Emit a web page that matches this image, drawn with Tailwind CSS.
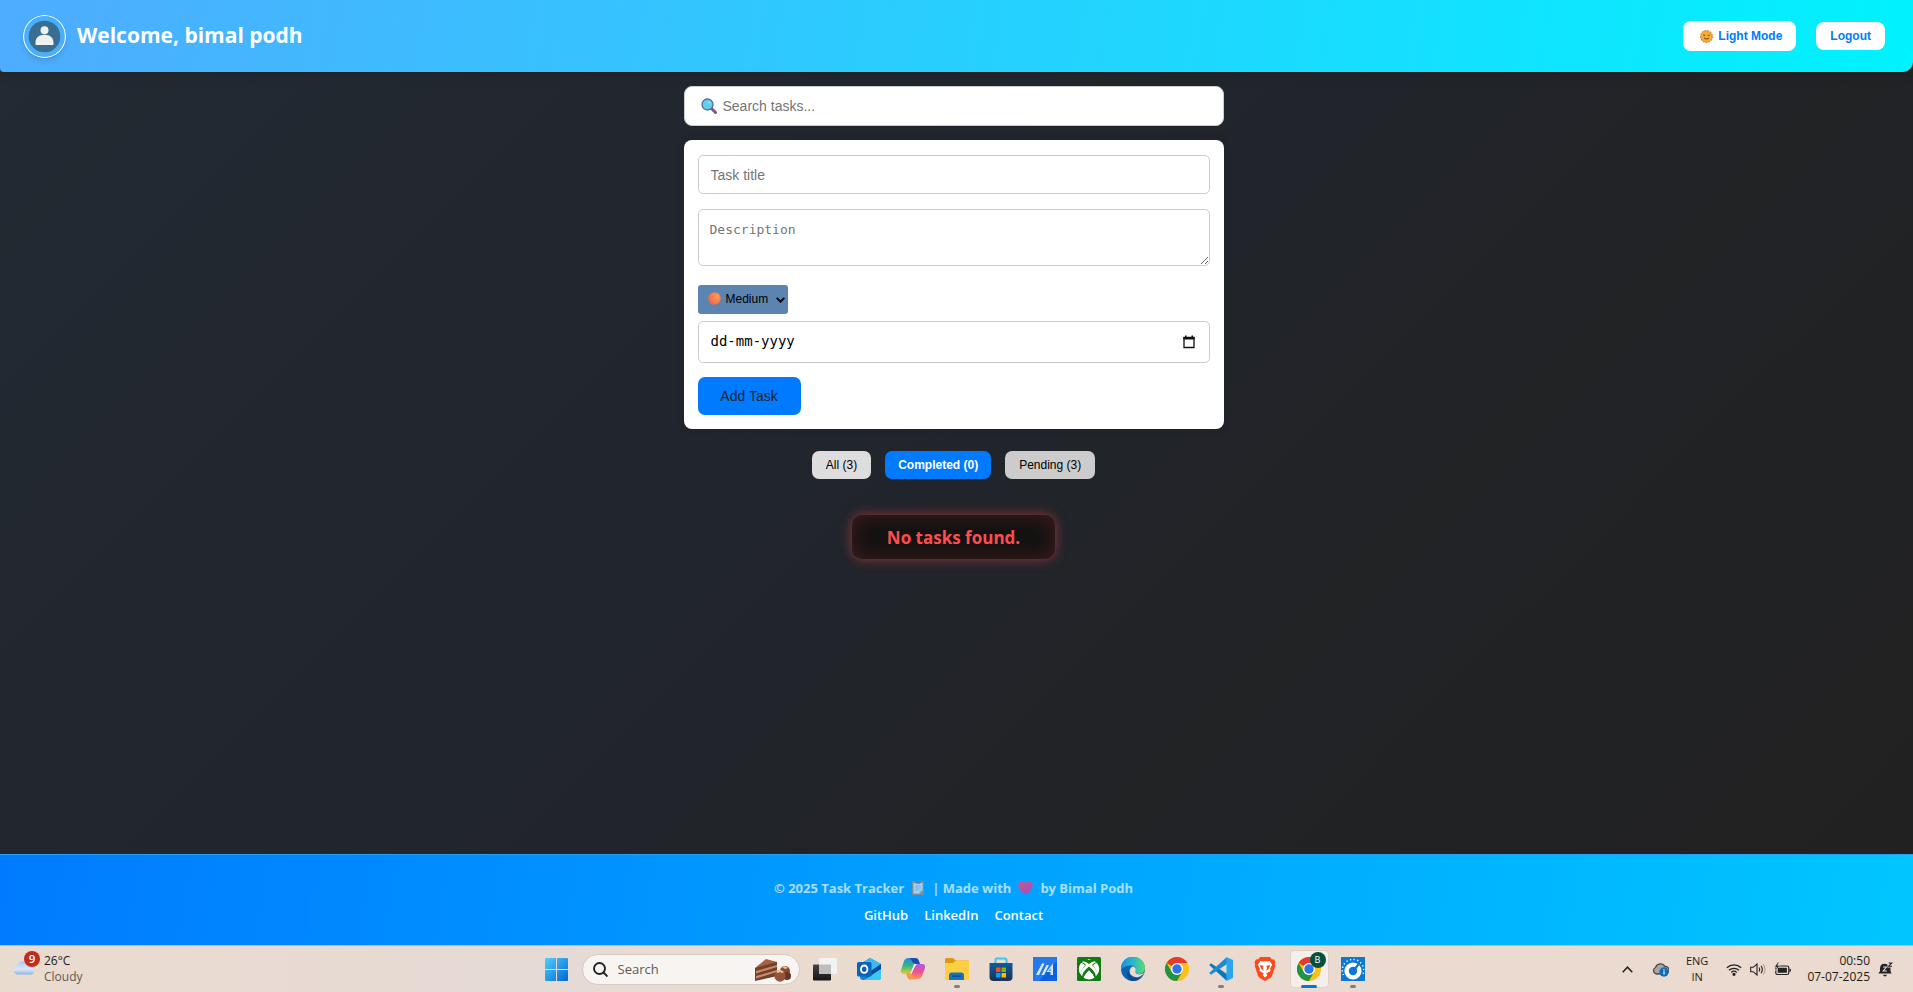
<!DOCTYPE html>
<html lang="en">
<head>
<meta charset="utf-8">
<title>Task Tracker</title>
<script src="https://cdn.jsdelivr.net/npm/@tailwindcss/browser@4"></script>
</head>
<body class="flex min-h-screen flex-col bg-[linear-gradient(135deg,#232a33_0%,#21252c_45%,#212326_65%,#212121_100%)] font-['Open_Sans',sans-serif]">

<!-- App header -->
<header class="flex h-[72px] items-center justify-between rounded-br-[10px] rounded-bl-[4px] bg-[linear-gradient(100deg,#4facfe,#00f2fe)] pr-7 pl-[23px] shadow-[0_4px_12px_rgba(0,0,0,0.1)]">
  <div class="flex items-center gap-[11px]">
    <svg class="size-[43px] rounded-full shadow-md" viewBox="0 0 43 43" role="img" aria-label="Avatar">
      <circle cx="21.500" cy="21.500" r="21" fill="#4aaefe" stroke="#fff" stroke-width="1.200"/>
      <circle cx="21.500" cy="21.500" r="15.800" fill="#376e92"/>
      <circle cx="21.500" cy="15.300" r="4" fill="#f0f0ee"/>
      <path d="M12.500 29.500v-2c0-5 4-7.700 9-7.700s9 2.700 9 7.700v2q0 .5-.8.5h-16.400q-.8 0-.8-.5z" fill="#f0f0ee"/>
    </svg>
    <h1 class="text-[21px] font-bold text-white">Welcome, bimal podh</h1>
  </div>
  <div class="flex items-center gap-5 font-['Liberation_Sans',sans-serif] text-xs font-bold text-[#007bff]">
    <button class="flex h-[30px] items-center gap-[5px] rounded-lg bg-white pr-[14px] pl-[17px]">
      <svg class="size-[13px]" viewBox="0 0 12 12" aria-hidden="true">
        <circle cx="6" cy="6" r="5.500" fill="#f7a43b" stroke="#c98a45" stroke-width="1" stroke-dasharray="1.600 1"/>
        <circle cx="6" cy="6" r="4.300" fill="#f8ae33"/>
        <path d="M3 4.600l1.800.5M9 4.600l-1.800.5M3.700 7.300q2.300 2 4.600 0" stroke="#6b4a2c" stroke-width="1" fill="none"/>
      </svg>
      <span>Light Mode</span>
    </button>
    <button class="h-7 rounded-lg bg-white px-[14px]">Logout</button>
  </div>
</header>

<main class="flex flex-1 flex-col items-center pt-[14px] pr-[6px]">
  <div class="relative w-full max-w-[540px]">
    <input type="search" aria-label="Search tasks" placeholder="Search tasks..." class="h-10 w-full rounded-lg border border-[#ccc] bg-white pr-4 pl-[38px] font-['Liberation_Sans',sans-serif] text-sm placeholder:text-[#757575]">
    <svg class="absolute top-[12px] left-[17px] size-4" viewBox="0 0 16 16" aria-hidden="true">
      <path d="M10.500 10.500l4 4" stroke="#83508e" stroke-width="3" stroke-linecap="round"/>
      <circle cx="6.500" cy="6.500" r="5.500" fill="#5fd0ee" stroke="#536b9c" stroke-width="1.300"/>
      <circle cx="8" cy="4.500" r="1" fill="#a9e9f7"/>
    </svg>
  </div>

  <form class="mt-[14px] flex w-full max-w-[540px] flex-col items-start rounded-lg bg-white px-[14px] pt-[15px] pb-[14px] shadow-[0_0_10px_rgba(0,0,0,0.1)]">
    <input type="text" aria-label="Task title" placeholder="Task title" class="h-[39px] w-full rounded-[5px] border border-[#ccc] px-3 font-['Liberation_Sans',sans-serif] text-sm placeholder:text-[#757575]">
    <textarea aria-label="Description" placeholder="Description" class="mt-[15px] block h-[57px] w-full resize-y rounded-[5px] border border-[#ccc] px-[11px] py-3 font-['DejaVu_Sans_Mono',monospace] text-[13px] leading-4 placeholder:text-[#757575]"></textarea>
    <div class="relative mt-[19px] font-['Liberation_Sans',sans-serif] text-xs">
      <select aria-label="Priority" class="block h-[29px] w-[90px] appearance-none rounded-[3px] bg-[#5b84b1] pb-[2px] pl-7 text-black">
        <option>Low</option>
        <option selected>Medium</option>
        <option>High</option>
      </select>
      <svg class="pointer-events-none absolute top-[7px] left-[10px] size-[13px]" viewBox="0 0 13 13" aria-hidden="true">
        <defs><radialGradient id="dot" cx=".7" cy=".35" r=".7"><stop offset="0" stop-color="#ffa04c"/><stop offset="1" stop-color="#f4674f"/></radialGradient></defs>
        <circle cx="6.500" cy="6.500" r="6.200" fill="url(#dot)"/>
      </svg>
      <svg class="pointer-events-none absolute top-[12px] right-[3px] h-[6px] w-[9px]" viewBox="0 0 9 6" fill="none" stroke="#000" stroke-width="2" aria-hidden="true"><path d="M.7.900l3.800 3.800L8.300.900"/></svg>
    </div>
    <div class="relative mt-[7px] w-full">
      <input type="text" aria-label="Due date" placeholder="dd-mm-yyyy" class="block h-[42px] w-full rounded-[5px] border border-[#ccc] px-3 pb-[2px] font-['DejaVu_Sans_Mono',monospace] text-sm placeholder:text-black">
      <button type="button" aria-label="Open calendar" class="absolute top-[14px] right-[14px]">
        <svg class="size-[14px]" viewBox="0 0 14 14" aria-hidden="true"><path d="M2 2.500h10v10H2z" fill="none" stroke="#111" stroke-width="1.300"/><path d="M1.400 2h11.200v2.500H1.400zM3 .500h1.500V3H3zM9.500.500H11V3H9.500z" fill="#111"/></svg>
      </button>
    </div>
    <button type="button" class="mt-[14px] h-[38px] w-[103px] rounded-[7px] bg-[#007bff] font-['Liberation_Sans',sans-serif] text-sm text-[#212529]">Add Task</button>
  </form>

  <nav aria-label="Filter" class="mt-[22px] flex gap-[14px] font-['Liberation_Sans',sans-serif] text-xs text-black">
    <button class="h-7 rounded-[7px] bg-[#ddd] px-[14px]">All (3)</button>
    <button class="h-7 rounded-[7px] bg-[#007bff] px-[13px] font-bold text-white">Completed (0)</button>
    <button class="h-7 rounded-[7px] bg-[#ccc] px-[14px]">Pending (3)</button>
  </nav>

  <p class="mt-9 flex h-11 items-center rounded-[10px] bg-[#141212] px-[35px] pt-[2px] text-[17px] font-bold text-[#ff4d4d] shadow-[0_0_12px_rgba(255,77,77,0.5),inset_0_0_20px_rgba(255,77,77,0.2)]">No tasks found.</p>
</main>

<footer class="flex h-[91px] flex-col items-center justify-center gap-[7px] border-t border-[#2aa0f5] bg-[linear-gradient(100deg,#007bff,#00c6ff)] pt-[2px] pr-[6px]">
  <p class="flex items-center text-[13px] leading-5 font-bold text-white/65">
    <span>© 2025 Task Tracker</span>
    <svg class="mx-2 h-[14px] w-3 opacity-80" viewBox="0 0 12 14" aria-hidden="true"><rect width="12" height="14" rx="1" fill="#9a8c82"/><path d="M1.500 2h9v7.500L7.500 12.500h-6z" fill="#cfe0f5"/><path d="M10.500 9.500h-3v3z" fill="#8fb4dd"/><rect x="3.500" width="5" height="2.800" rx=".6" fill="#5b7fa5"/><path d="M3 5h6M3 7h6M3 9h4" stroke="#7ea6d4" stroke-width=".8"/></svg>
    <span>| Made with</span>
    <svg class="mx-[7px] h-[14px] w-[15px]" viewBox="0 0 15 14" aria-hidden="true"><defs><linearGradient id="heart" x2=".6" y2="1"><stop offset="0" stop-color="#c85a83"/><stop offset="1" stop-color="#a24fc4"/></linearGradient></defs><path d="M7.500 13.800C4 11.500.2 8.300.2 4.400.2 2 1.900.400 4 .400c1.500 0 2.800.8 3.500 2C8.200 1.200 9.500.400 11 .400c2.100 0 3.800 1.600 3.800 4 0 3.900-3.800 7.100-7.300 9.400z" fill="url(#heart)"/></svg>
    <span>by Bimal Podh</span>
  </p>
  <nav aria-label="Links" class="flex gap-4 text-[13px] leading-5 font-semibold text-white">
    <a href="#github">GitHub</a>
    <a href="#linkedin">LinkedIn</a>
    <a href="#contact">Contact</a>
  </nav>
</footer>

<!-- Desktop taskbar -->
<div class="grid h-[47px] grid-cols-[1fr_auto_1fr] border-t border-[#c4b8b0] bg-[linear-gradient(90deg,#eadbcf,#e6dad6_30%,#ebdbcf_45%,#ebdacf)] pr-1 text-[#1c1a19]">
  <div class="flex items-start gap-2 pt-1 pl-3">
    <svg class="h-7 w-7" viewBox="0 0 28 28" aria-hidden="true">
      <defs><linearGradient id="cloud" x2="0" y2="1"><stop offset="0" stop-color="#a9c8f5"/><stop offset=".6" stop-color="#dce9fb"/><stop offset="1" stop-color="#8eb1ec"/></linearGradient></defs>
      <path d="M5 24.500a5 5 0 0 1 0-9.500 7.500 7.500 0 0 1 13.500 1 4.500 4.500 0 0 1 1 8.500z" fill="url(#cloud)"/>
      <circle cx="20" cy="9" r="8" fill="#c42b1f"/>
      <text x="20" y="13" font-size="11.500" fill="#fff" text-anchor="middle" font-weight="600">9</text>
    </svg>
    <div class="-ml-1 pt-[3px] text-xs leading-4">
      <p>26°C</p>
      <p class="text-[#5f5853]">Cloudy</p>
    </div>
  </div>

  <div class="flex items-center">
    <button aria-label="Start" class="flex w-11 justify-center">
      <svg class="size-[23px]" viewBox="0 0 23 23"><defs><linearGradient id="win" x2="1" y2="1"><stop offset="0" stop-color="#4fd0ff"/><stop offset="1" stop-color="#0067cf"/></linearGradient></defs><path d="M1 0h10v11H0V1q0-1 1-1zM12 0h10q1 0 1 1v10H12zM0 12h11v11H1q-1 0-1-1zM12 12h11v10q0 1-1 1H12z" fill="url(#win)"/></svg>
    </button>
    <label class="relative mr-[3px] ml-[3px] block w-[218px]">
      <svg class="absolute top-[8px] left-[11px] size-[15px]" viewBox="0 0 15 15" fill="none" stroke="#222" stroke-width="1.900" aria-hidden="true"><circle cx="6.500" cy="6.500" r="5.500"/><path d="M10.500 10.500l4 4"/></svg>
      <input type="text" aria-label="Search" placeholder="Search" class="block h-[31px] w-full rounded-full border border-[#d5c9c1] bg-[#f8f4f1] pl-[35px] text-[13px] placeholder:text-[#5c5a58]">
      <svg class="absolute top-1 right-[9px] h-6 w-9" viewBox="0 0 36 24" aria-hidden="true">
        <path d="M0 10L11 1l11 3v2L1 12z" fill="#a6613f"/><path d="M0 10l22-6v14L0 23z" fill="#70402c"/><path d="M1 13l21-6v2L1 15.500zM1 18l21-6v2L1 20.500z" fill="#c98a66"/>
        <circle cx="30" cy="13" r="5" fill="#88492f"/><circle cx="32" cy="18" r="4" fill="#673522"/><circle cx="25" cy="18" r="5.700" fill="#94533a"/><path d="M21 14q4-4 8 0l-2 1-2-1-2 1zM27 9q3-2 6 1l-3 1z" fill="#e4c3a6"/>
      </svg>
    </label>
    <button aria-label="Task view" class="flex w-11 justify-center">
      <svg class="h-[23px] w-6" viewBox="0 0 24 23"><defs><linearGradient id="tv" x2="0" y2="1"><stop offset="0" stop-color="#454545"/><stop offset="1" stop-color="#161616"/></linearGradient></defs><rect y="6.500" width="18" height="16" rx="1" fill="url(#tv)"/><rect x="6" width="18" height="16" rx="1" fill="#f3f3f3"/><path d="M6 6.500h12V16H6z" fill="#bdbdbd"/></svg>
    </button>
    <button aria-label="Outlook" class="flex w-11 justify-center">
      <svg class="size-6" viewBox="0 0 24 24"><path d="M3 7L13 1l11 6v13q0 3-3 3H6q-3 0-3-3z" fill="#1382d3"/><path d="M3 8l10-7 11 6-10 7z" fill="#3abaf2"/><path d="M14 14l10-7v6L8 23z" fill="#0a4b9c"/><path d="M7 23l17-11v8q0 3-3 3z" fill="#39c8f2"/><rect y="5" width="14.500" height="14.500" rx="1.500" fill="#0c63b8"/><ellipse cx="7.200" cy="12.200" rx="3.200" ry="3.700" fill="none" stroke="#fff" stroke-width="1.900"/></svg>
    </button>
    <button aria-label="Copilot" class="flex w-11 justify-center">
      <svg class="size-6" viewBox="0 0 24 24"><defs><linearGradient id="cpa" x2="0" y2="1"><stop offset="0" stop-color="#2287e6"/><stop offset=".5" stop-color="#36b784"/><stop offset="1" stop-color="#eacf2a"/></linearGradient><linearGradient id="cpb" x2="0" y2="1"><stop offset="0" stop-color="#ab5cf0"/><stop offset=".5" stop-color="#ee4f94"/><stop offset="1" stop-color="#fa9158"/></linearGradient></defs><path d="M8 1h7l-2 6-3 8q-1 2-3 2H3q-4 0-3-4L3 4q1-3 5-3z" fill="url(#cpa)"/><path d="M8 1h7q2 0 3 3l1 3h-4q-3 0-4-3-1-3-3-3z" fill="#174cb0"/><path d="M16 22H9l2-6 3-7q1-2 3-2h4q4 0 3 4l-3 8q-1 3-5 3z" fill="url(#cpb)"/><path d="M5 16h4q2 0 3 3 1 3 3 3.500H9q-2 0-3-3z" fill="#f59a4a"/><path d="M14.500 7h1L10 16.500H8.800q1.200-.5 1.700-2l2.300-6q.5-1.300 1.700-1.500z" fill="#f6ebe6"/></svg>
    </button>
    <button aria-label="File Explorer" class="relative flex w-11 justify-center">
      <svg class="size-6" viewBox="0 0 24 24"><path d="M0 2.500Q0 1 1.500 1H8l3 2.500h12q1 0 1 1V9H0z" fill="#d99a10"/><path d="M0 6h8l3-2.500h12q1 0 1 1V22q0 1-1 1H1q-1 0-1-1z" fill="#ffcf43"/><path d="M4 23v-5q0-2.500 2.500-2.500h10Q19 15.500 19 18v5z" fill="#1673bf"/><rect x="7" y="18.500" width="9" height="1.500" rx=".7" fill="#0b4f91"/></svg>
      <span class="absolute top-7 h-[3px] w-[6px] rounded-full bg-[#857d78]"></span>
    </button>
    <button aria-label="Microsoft Store" class="flex w-11 justify-center">
      <svg class="size-6" viewBox="0 0 24 24"><defs><linearGradient id="st" x2="0" y2="1"><stop offset="0" stop-color="#0f5c9c"/><stop offset="1" stop-color="#1f3056"/></linearGradient></defs><path d="M6.500 7V3q0-1.500 1.500-1.500h8q1.500 0 1.500 1.500v4" fill="none" stroke="#3cc6ee" stroke-width="2"/><path d="M.5 6h23v14q0 4-4 4h-15q-4 0-4-4z" fill="url(#st)"/><path d="M7 10.500h4.500V15H7z" fill="#f25022"/><path d="M12.500 10.500H17V15h-4.500z" fill="#7fba00"/><path d="M7 16h4.500v4.500H7z" fill="#00a4ef"/><path d="M12.500 16H17v4.500h-4.500z" fill="#ffb900"/></svg>
    </button>
    <button aria-label="MyASUS" class="flex w-11 justify-center">
      <svg class="size-6" viewBox="0 0 24 24"><path d="M0 0h24v24H0z" fill="#0b62e0"/><path d="M0 0h24v4L6 24H0z" fill="#2679ea"/><path d="M3 18L9 6.500h2.500L6 18zM8.500 18l5-10H16l-5 10zM13.500 15L20 6.500V18h-2.500v-3z" fill="#d9e8fb"/><path d="M16 14h1.500v-3z" fill="#1469e2"/></svg>
    </button>
    <button aria-label="Xbox" class="flex w-11 justify-center">
      <svg class="size-6" viewBox="0 0 24 24"><rect width="24" height="24" rx="1.500" fill="#107c10"/><circle cx="12" cy="12" r="10" fill="#fff"/><path d="M4.500 4.500Q8 3.500 12 7q4-3.500 7.500-2.500l-2-2Q14 1.500 12 3 10 1.500 6.500 2.500zM12 9.500q7 5.500 7 10.500l-1.500 1Q16 17 12 13.500 8 17 6.500 21L5 20q0-5 7-10.500zM4.500 5Q7 5.500 9 8q-5 5-6 9L1.500 15 2 7zM19.500 5Q17 5.500 15 8q5 5 6 9l1.500-2L22 7z" fill="#107c10"/><path d="M4 6q2 0 4 2.300Q4 13 3.500 17.300A10 10 0 0 1 4 6zM20 6q-2 0-4 2.300 4 4.700 4.500 9A10 10 0 0 0 20 6z" fill="#fff"/><path d="M12 13.500q4 3.500 5.500 7.200a10 10 0 0 1-11 0Q8 17 12 13.500z" fill="#fff"/></svg>
    </button>
    <button aria-label="Edge" class="flex w-11 justify-center">
      <svg class="size-6" viewBox="0 0 24 24"><defs><linearGradient id="ed" x2="1"><stop offset="0" stop-color="#168fd9"/><stop offset=".5" stop-color="#28b8d0"/><stop offset="1" stop-color="#5fdc62"/></linearGradient></defs><circle cx="12" cy="12" r="12" fill="#0d64b5"/><path d="M0 12a12 12 0 0 1 24-1c0 4-3 6-6.500 6-3 0-4-1.500-3-3 1.500-3-1-5.500-5-5.500C4.500 8.500 1 11 0 13z" fill="url(#ed)"/><path d="M8.500 13.500c-1 6 5 9.500 12.500 6.200A12 12 0 0 1 10 23.800C5 21 5 15 8.500 13.500z" fill="#114a8b"/><path d="M14.500 14c1.200-2-.5-4.500-3-4.500-4 2.500-4 8 1 10 3.500 1.300 7.500 1 11-4-5 3.500-10 1.500-9-1.500z" fill="#ebdacf"/></svg>
    </button>
    <button aria-label="Chrome" class="flex w-11 justify-center">
      <svg class="size-6" viewBox="0 0 24 24"><g id="chrome"><circle cx="12" cy="12" r="12" fill="#fbc116"/><path d="M1.600 6A12 12 0 0 1 22.400 6H12L6.800 9z" fill="#e33b2e"/><path d="M1.600 6A12 12 0 0 0 12 24l5.200-9-5.200 2.500-5.200-2.500z" fill="#229342"/><circle cx="12" cy="12" r="6" fill="#fff"/><circle cx="12" cy="12" r="4.700" fill="#2d74ea"/></g></svg>
    </button>
    <button aria-label="Visual Studio Code" class="relative flex w-11 justify-center">
      <svg class="size-6" viewBox="0 0 24 24"><path d="M2 6.300L.2 8l16 14.500L18 24V17z" fill="#0d77bd"/><path d="M2 17.700L.2 16l16-14.500L18 0v7z" fill="#1c8bd1"/><path d="M17.500 0L24 3v18l-6.500 3q-.8 0 0-2z" fill="#2aa6ef"/></svg>
      <span class="absolute top-7 h-[3px] w-[6px] rounded-full bg-[#857d78]"></span>
    </button>
    <button aria-label="Brave" class="flex w-11 justify-center">
      <svg class="size-6" viewBox="0 0 24 24"><path d="M7 0h10l2 2.500 2-.3 1.500 3-.7 1.500.5 2L19 19q-1 2-7 5-6-3-7-5L1.700 8.700l.5-2-.7-1.500 1.500-3 2 .3z" fill="#fb4b1e"/><path d="M7.500 4l2.500.5 2-.4 2 .4 2.500-.5 2.700 3.500-2 4 .3 2.500-3.500 2-1 .8 1.500 1.200L12 20.500 9.500 18l1.500-1.200-1-.8-3.500-2 .3-2.500-2-4z" fill="#fff"/><path d="M7 8l3.500.7L10 11l.7 3L8 11.500zM17 8l-3.500.7L14 11l-.7 3L16 11.500z" fill="#fb4b1e"/></svg>
    </button>
    <button aria-label="Chrome, profile B" class="relative flex h-[38px] w-11 items-center justify-center">
      <span class="absolute inset-y-0 right-[2px] left-[3px] rounded border border-[#ddd1c9] bg-[#f5eeea]"></span>
      <svg class="relative size-6" viewBox="0 0 24 24"><use href="#chrome"/></svg>
      <span class="absolute top-[2px] right-[5px] flex size-4 items-center justify-center rounded-full bg-[#07503f] text-[9px] text-white">B</span>
      <span class="absolute bottom-0 h-[3px] w-4 rounded-full bg-[#0c74cf]"></span>
    </button>
    <button aria-label="Settings utility" class="relative flex w-11 justify-center">
      <svg class="size-6" viewBox="0 0 24 24"><path d="M0 0h24v24H0z" fill="#0a78d4"/><path d="M2.500 18A10.700 10.700 0 1 1 21.500 18" fill="none" stroke="#fff" stroke-width="1.500" stroke-dasharray="1.300 2.400"/><circle cx="12" cy="14" r="8.600" fill="#fff"/><circle cx="12" cy="14" r="4.200" fill="#0a78d4"/><path d="M12 14l5.500-6.500" stroke="#0a78d4" stroke-width="2.200"/></svg>
      <span class="absolute top-7 h-[3px] w-[6px] rounded-full bg-[#857d78]"></span>
    </button>
  </div>

  <div class="flex items-center justify-end pr-4 text-xs">
    <button aria-label="Hidden icons" class="mr-[19px]"><svg class="h-[7px] w-[11px]" viewBox="0 0 11 7" fill="none" stroke="#222" stroke-width="1.500"><path d="M.7 6.200L5.500 1.200l4.800 5"/></svg></button>
    <svg class="mr-[17px] h-[15px] w-[17px]" viewBox="0 0 17 15" role="img" aria-label="OneDrive"><path d="M4 12A3.500 3.500 0 0 1 3.500 5.500 5.200 5.200 0 0 1 13 4.500a3.500 3.500 0 0 1 1 7z" fill="#a9a6a4" stroke="#4b4948" stroke-width="1.300"/><circle cx="12" cy="10" r="4.700" fill="#0f6cbd"/><path d="M12 9.300v3.200M12 7.200v1.200" stroke="#fff" stroke-width="1.200"/></svg>
    <p class="mr-[18px] text-center text-[11px] leading-4">ENG<br>IN</p>
    <svg class="mr-2 h-[13px] w-4" viewBox="0 0 16 13" fill="none" stroke="#222" stroke-width="1.200" role="img" aria-label="Wi-Fi"><path d="M.8 4.800a10.500 10.500 0 0 1 14.400 0M3 7.300a7.200 7.200 0 0 1 10 0M5.200 9.500a4.200 4.200 0 0 1 5.600 0"/><circle cx="8" cy="11.300" r="1" fill="#222"/></svg>
    <svg class="mr-2 h-[13px] w-4" viewBox="0 0 16 13" fill="none" stroke="#222" stroke-width="1.100" role="img" aria-label="Volume"><path d="M.7 4.300h2.500L7 1v11L3.200 8.700H.7zM9 4.500q1.300 2 0 4M11 2.800q2.600 3.700 0 7.400"/><path d="M13.300 1.200q3.400 5.300 0 10.600" stroke="#aaa09a"/></svg>
    <svg class="mr-[16px] h-[14px] w-[17px]" viewBox="0 0 17 14" role="img" aria-label="Battery charging"><rect x="1.800" y="4" width="13" height="8.500" rx="1.800" fill="none" stroke="#222" stroke-width="1.200"/><rect x="3.700" y="5.800" width="9.200" height="5" rx=".6" fill="#222"/><path d="M15.500 6.500q1.500 0 1.500 1.700t-1.500 1.700z" fill="#222"/><path d="M4 0L.5 5h2L1.500 9l4.300-5.500H3.700L5 0z" fill="#222" stroke="#ebdacf" stroke-width=".6"/></svg>
    <p class="mr-2 text-right leading-4">00:50<br>07-07-2025</p>
    <svg class="size-[15px]" viewBox="0 0 15 15" role="img" aria-label="Notifications"><path d="M2 9V6.500Q2 1.700 6.500 1.700q2 0 3 1v2.800h3V9l1 2.500H.5zM5 12.800h4q-.5 1.700-2 1.700t-2-1.700z" fill="#222"/><path d="M5 5h3.500L5.200 9h3.600" fill="none" stroke="#ebdacf" stroke-width="1.100"/><path d="M10.700 1h3l-3 3.200h3.300" fill="none" stroke="#222" stroke-width="1.100"/></svg>
  </div>
</div>
</body>
</html>
